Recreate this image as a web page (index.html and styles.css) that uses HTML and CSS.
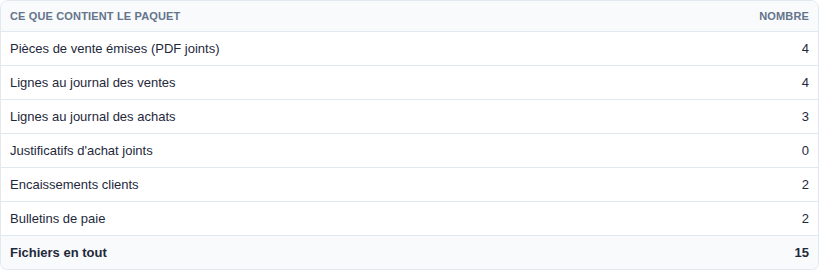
FILE: index.html
```html
<!DOCTYPE html>
<html>
<head>
    <title>Contenu du paquet</title>
    <link rel="stylesheet" href="styles.css">
</head>
<body>
    <div class="table-wrap">
        <table class="pack-table">
            <thead>
                <tr>
                    <th>Ce que contient le paquet</th>
                    <th class="num">Nombre</th>
                </tr>
            </thead>
            <tbody>
                <tr><td>Pièces de vente émises (PDF joints)</td><td class="num">4</td></tr>
                <tr><td>Lignes au journal des ventes</td><td class="num">4</td></tr>
                <tr><td>Lignes au journal des achats</td><td class="num">3</td></tr>
                <tr><td>Justificatifs d'achat joints</td><td class="num">0</td></tr>
                <tr><td>Encaissements clients</td><td class="num">2</td></tr>
                <tr><td>Bulletins de paie</td><td class="num">2</td></tr>
            </tbody>
            <tfoot>
                <tr><td>Fichiers en tout</td><td class="num">15</td></tr>
            </tfoot>
        </table>
    </div>
</body>
</html>
```

FILE: styles.css
```css
/* Tableau du paquet */
body {
    margin: 0;
    font-family: "Liberation Sans", Arial, sans-serif;
    color: #1e293b;
    background: #fff;
}

.table-wrap {
    width: 819px;
    height: 270px;
    box-sizing: border-box;
    border: 1px solid #e2e8f0;
    border-radius: 8px;
    overflow: hidden;
    box-shadow: 0 1px 2px rgba(15, 23, 42, 0.06);
}

.pack-table {
    width: 100%;
    border-collapse: collapse;
    font-size: 13px;
}

.pack-table th {
    height: 30px;
    padding: 0 9px;
    text-align: left;
    font-size: 11px;
    font-weight: bold;
    text-transform: uppercase;
    letter-spacing: 0.15px;
    color: #64748b;
    background: #f8fafc;
    border-bottom: 1px solid #e2e8f0;
}

.pack-table td {
    height: 33px;
    padding: 0 9px;
    border-bottom: 1px solid #e2e8f0;
}

.pack-table .num {
    text-align: right;
}

.pack-table tfoot td {
    font-weight: bold;
    background: #f8fafc;
    border-bottom: none;
}
```
